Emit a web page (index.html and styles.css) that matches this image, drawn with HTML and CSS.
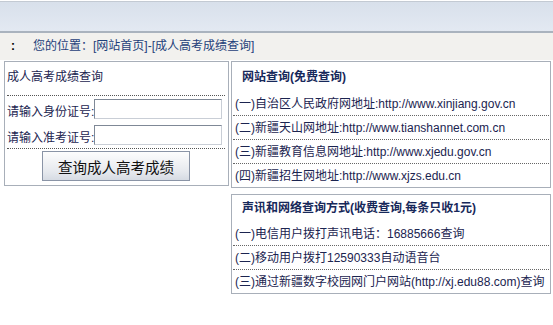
FILE: index.html
```html
<!DOCTYPE html>
<html lang="zh-CN">
<head>
    <meta charset="UTF-8">
    <title>成人高考成绩查询</title>
    <link rel="stylesheet" href="styles.css">
</head>
<body>
    <div class="topbar"></div>
    <div class="crumb"><span class="crumb-dot">:</span>您的位置：[网站首页]-[成人高考成绩查询]</div>

    <div class="main">
        <div class="box left-box">
            <div class="left-title">成人高考成绩查询</div>
            <div class="form-row">
                <label for="idcard">请输入身份证号:</label>
                <input type="text" id="idcard" class="field">
            </div>
            <div class="form-row form-row-last">
                <label for="examno">请输入准考证号:</label>
                <input type="text" id="examno" class="field">
            </div>
            <div class="btn-row">
                <button type="button" class="query-btn">查询成人高考成绩</button>
            </div>
        </div>

        <div class="right-col">
            <div class="box">
                <div class="box-title title-tall">网站查询(免费查询)</div>
                <div class="info-row">(一)自治区人民政府网地址:http://www.xinjiang.gov.cn</div>
                <div class="info-row">(二)新疆天山网地址:http://www.tianshannet.com.cn</div>
                <div class="info-row">(三)新疆教育信息网地址:http://www.xjedu.gov.cn</div>
                <div class="info-row">(四)新疆招生网地址:http://www.xjzs.edu.cn</div>
            </div>
            <div class="box">
                <div class="box-title">声讯和网络查询方式(收费查询,每条只收1元)</div>
                <div class="info-row">(一)电信用户拨打声讯电话：16885666查询</div>
                <div class="info-row">(二)移动用户拨打12590333自动语音台</div>
                <div class="info-row">(三)通过新疆数字校园网门户网站(http://xj.edu88.com)查询</div>
            </div>
        </div>
    </div>
</body>
</html>
```

FILE: styles.css
```css
body {
    margin: 0;
    font-family: "Liberation Sans", "Noto Sans CJK SC", sans-serif;
    font-size: 12px;
    color: #1b2450;
    background-color: #fff;
}

.topbar {
    height: 29px;
    border-top: 1px solid #c3cad3;
    border-bottom: 2px solid #aab3be;
    margin-top: 1px;
    background: linear-gradient(to bottom, #d8e0eb, #e3e9f2);
}

.crumb {
    height: 27px;
    line-height: 27px;
    padding-left: 11px;
    background-color: #f2f1ee;
    color: #1e3f7a;
}

.crumb-dot {
    display: inline-block;
    width: 22px;
    color: #000;
    font-weight: bold;
}

.main {
    display: flex;
    align-items: flex-start;
    gap: 2px;
    margin-top: 1px;
    padding-left: 4px;
}

.box {
    border: 1px solid #a8afb9;
    background-color: #fff;
}

.left-box {
    width: 225px;
    height: 125px;
    padding: 0 3px 0 2px;
    box-sizing: border-box;
}

.left-title {
    height: 33px;
    line-height: 30px;
    border-bottom: 1px dotted #555;
}

.form-row {
    display: flex;
    align-items: center;
    height: 26px;
}

.form-row label {
    padding-top: 3px;
}

.form-row-last {
    border-bottom: 1px dotted #555;
}

.field {
    width: 128px;
    height: 20px;
    box-sizing: border-box;
    margin: 0;
    border: 1px solid #c9ced6;
    border-top-color: #7f8896;
    border-left-color: #7f8896;
    background-color: #fff;
}

.btn-row {
    display: flex;
    justify-content: center;
    padding-top: 2px;
}

.query-btn {
    width: 148px;
    height: 30px;
    border: 1px solid #8a94a6;
    background: linear-gradient(to bottom, #fdfdfd, #e6e9ee 70%, #d6dbe3);
    font-family: "Noto Sans CJK SC", sans-serif;
    font-size: 14.5px;
    color: #111;
    padding: 0;
}

.right-col {
    display: flex;
    flex-direction: column;
    gap: 6px;
    width: 320px;
}

.box-title {
    height: 27px;
    line-height: 27px;
    padding-left: 10px;
    font-weight: bold;
    color: #17285a;
}

.title-tall {
    height: 30px;
    line-height: 31px;
}

.info-row {
    height: 23px;
    line-height: 24px;
    margin: 0 1px;
    padding-left: 2px;
    border-bottom: 1px dotted #666;
    white-space: nowrap;
}

.info-row:last-child {
    border-bottom: none;
}
```
